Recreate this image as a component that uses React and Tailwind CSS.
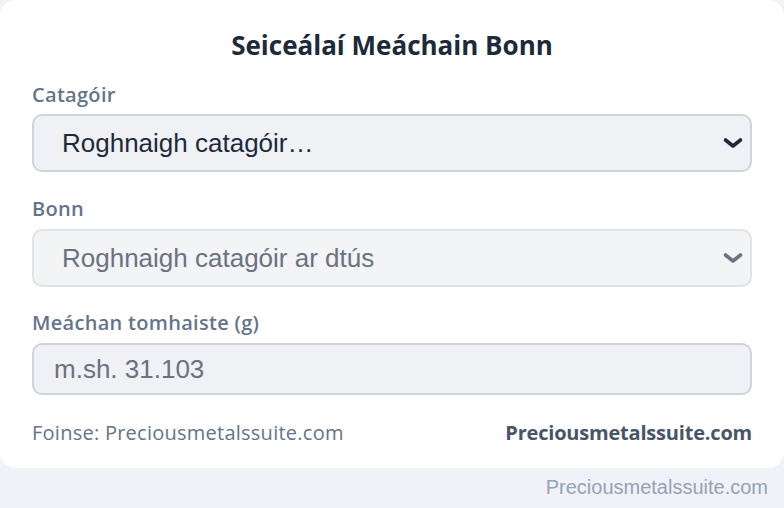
import React from "react";

function Chevron({ className }) {
  return (
    <svg width="22" height="14" viewBox="0 0 22 14" className={className}>
      <path d="M3.5 4 L11 10 L18.5 4" fill="none" stroke="currentColor" strokeWidth="3.6" strokeLinecap="round" strokeLinejoin="round" />
    </svg>
  );
}

export default function App() {
  const ui = { fontFamily: '"Open Sans", "Noto Sans", sans-serif' };
  const arial = { fontFamily: '"Liberation Sans", Arial, sans-serif' };
  return (
    <div className="w-[784px] h-[508px] bg-[#f0f2f7] overflow-hidden" style={ui}>
      <div className="bg-white rounded-2xl px-8 pt-[27px] pb-[21px] flex flex-col">
        <h1 className="text-center text-[26px] font-bold text-[#1e293b] leading-[36px]">Seiceálaí Meáchain Bonn</h1>
        <label className="mt-[18px] text-[20px] font-semibold text-[#64748b] leading-[28px] tracking-[0.3px]">Catagóir</label>
        <div className="mt-[5px] h-[58px] rounded-[10px] border-2 border-[#cfd3da] bg-[#eff1f4] flex items-center justify-between pl-[28px] pr-[6px]">
          <span className="text-[26px] text-[#1e293b]" style={arial}>Roghnaigh catagóir…</span>
          <Chevron className="text-[#1e293b]" />
        </div>
        <label className="mt-[23px] text-[20px] font-semibold text-[#64748b] leading-[28px] tracking-[0.3px]">Bonn</label>
        <div className="mt-[6px] h-[58px] rounded-[10px] border-2 border-[#e0e3e8] bg-[#f3f4f6] flex items-center justify-between pl-[28px] pr-[6px]">
          <span className="text-[26px] text-[#6b7280]" style={arial}>Roghnaigh catagóir ar dtús</span>
          <Chevron className="text-[#6b7280]" />
        </div>
        <label className="mt-[22px] text-[20px] font-semibold text-[#64748b] leading-[28px] tracking-[0.3px]">Meáchan tomhaiste (g)</label>
        <div className="mt-[6px] h-[52px] rounded-[10px] border-2 border-[#cfd3da] bg-[#eff1f4] flex items-center pl-[20px]">
          <span className="text-[26px] text-[#6b7280]" style={arial}>m.sh. 31.103</span>
        </div>
        <div className="mt-[24px] flex justify-between items-center text-[20px] leading-[28px]">
          <span className="text-[#64748b] tracking-[0.25px]">Foinse: Preciousmetalssuite.com</span>
          <span className="font-bold text-[#475569] tracking-[-0.2px]">Preciousmetalssuite.com</span>
        </div>
      </div>
      <div className="text-right pr-4 pt-[7px] text-[20px] leading-[24px] text-[#94a3b8]" style={arial}>Preciousmetalssuite.com</div>
    </div>
  );
}
